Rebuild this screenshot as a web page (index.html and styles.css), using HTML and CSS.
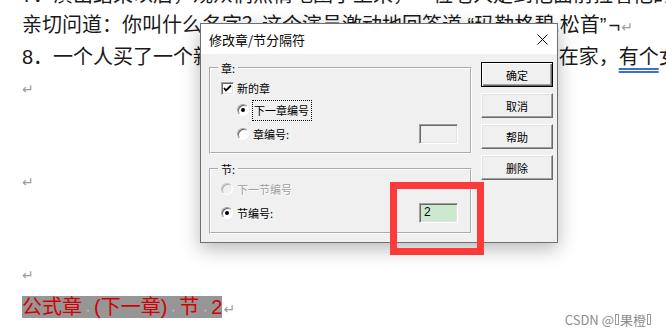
FILE: index.html
```html
<!DOCTYPE html>
<html lang="zh-CN">
<head>
    <meta charset="UTF-8">
    <title>修改章/节分隔符</title>
    <link rel="stylesheet" href="styles.css">
</head>
<body>
    <div class="doc">
        <p class="line first">7．演出结束以后，观众们热情地围了上来，一位老人走到他面前拉着他的手</p>
        <p class="line">亲切问道：你叫什么名字？这个演员激动地回答道 “玛勒格碧.松首”<span class="hook">¬</span><span class="pm">↵</span></p>
        <p class="line">8．一个人买了一个新奇的玩具，回到家里， 正好他的妻子不在家，<span class="uline">有个</span>女人</p>
        <p class="line empty"><span class="pm">↵</span></p>
        <p class="line empty gap"><span class="pm">↵</span></p>
        <p class="line empty gap"><span class="pm">↵</span></p>
        <p class="line"><span class="field">公式章<span class="sp">·</span>(下一章)<span class="sp">·</span>节<span class="sp">·</span>2</span><span class="pm">↵</span></p>
    </div>

    <div class="dialog">
        <div class="titlebar">
            <span class="title">修改章/节分隔符</span>
            <svg class="close" width="11" height="11" viewBox="0 0 11 11">
                <path d="M0.5 0.5 L10.5 10.5 M10.5 0.5 L0.5 10.5" stroke="#000" stroke-width="1" fill="none"/>
            </svg>
        </div>
        <div class="dialog-body">
            <div class="groups">
                <fieldset class="group chapter">
                    <legend>章:</legend>
                    <div class="opt first-opt">
                        <span class="check">
                            <svg width="11" height="11" viewBox="0 0 11 11">
                                <polyline points="2,5 4,7.5 9,2.5" stroke="#000" stroke-width="1.8" fill="none"/>
                            </svg>
                        </span>
                        <span>新的章</span>
                    </div>
                    <div class="opt indent">
                        <span class="radio on"></span>
                        <span class="focus">下一章编号</span>
                    </div>
                    <div class="opt indent third-opt">
                        <span class="radio"></span>
                        <span>章编号:</span>
                        <span class="num"></span>
                    </div>
                </fieldset>
                <fieldset class="group section">
                    <legend>节:</legend>
                    <div class="opt first-opt disabled">
                        <span class="radio"></span>
                        <span>下一节编号</span>
                    </div>
                    <div class="opt second-opt">
                        <span class="radio on"></span>
                        <span>节编号:</span>
                        <span class="num filled">2</span>
                    </div>
                </fieldset>
            </div>
            <div class="buttons">
                <button class="btn default">确定</button>
                <button class="btn">取消</button>
                <button class="btn">帮助</button>
                <button class="btn">删除</button>
            </div>
        </div>
    </div>

    <div class="callout"></div>

    <div class="watermark">CSDN @<span class="tofu"></span>果橙<span class="tofu"></span></div>
</body>
</html>
```

FILE: styles.css
```css
* {
    box-sizing: border-box;
}

body {
    margin: 0;
    width: 666px;
    height: 336px;
    overflow: hidden;
    background: #fff;
    font-family: "Liberation Sans", "Noto Sans CJK SC", sans-serif;
    color: #1a1a1a;
}

/* document text behind the dialog */
.doc {
    margin-top: -19px;
    padding-left: 22px;
}

.line {
    margin: 0;
    height: 32px;
    line-height: 32px;
    font-size: 20px;
    white-space: nowrap;
}

.line.first {
    height: 28px;
    line-height: 28px;
}

.line.gap {
    margin-top: 61px;
}

.hook {
    margin-left: 2px;
}

.pm {
    font-family: "DejaVu Sans", sans-serif;
    font-size: 14px;
    color: #9c9c9c;
    margin-left: 1px;
}

.empty .pm {
    margin-left: 0;
    vertical-align: 6px;
}

.uline {
    text-decoration: underline double #3b6fd4;
    text-underline-offset: 4px;
}

.field {
    background: #969696;
    color: #d40000;
}

.sp {
    display: inline-block;
    width: 12px;
    text-align: center;
    color: #d8d8d8;
    font-size: 12px;
}

/* dialog */
.dialog {
    position: absolute;
    left: 200px;
    top: 23px;
    width: 358px;
    height: 220px;
    border: 1px solid #6f6f6f;
    background: #f0f0f0;
    box-shadow: 0 6px 18px rgba(0, 0, 0, 0.28);
    font-family: "Noto Sans CJK SC", sans-serif;
    font-size: 11px;
    color: #000;
}

.titlebar {
    height: 30px;
    background: #fff;
    display: flex;
    align-items: center;
    justify-content: space-between;
    padding: 0 9px 0 8px;
}

.title {
    font-size: 13px;
}

.dialog-body {
    display: flex;
    gap: 9px;
    padding: 7px 4px 0 8px;
}

.groups {
    width: 263px;
    display: flex;
    flex-direction: column;
    gap: 8px;
}

.group {
    margin: 0;
    padding: 0 12px 0 10px;
    border: 2px groove #fff;
    min-width: 0;
}

.group legend {
    padding: 0 3px;
    margin-left: -3px;
    line-height: 14px;
    height: 14px;
}

.chapter {
    padding-bottom: 7px;
}

.section {
    padding-bottom: 8px;
}

.opt {
    display: flex;
    align-items: center;
    height: 22px;
    gap: 4px;
}

.first-opt {
    margin-top: 2px;
}

.second-opt,
.third-opt {
    margin-top: 2px;
}

.indent {
    margin-left: 16px;
}

.check {
    width: 13px;
    height: 13px;
    margin-right: -1px;
    background: #fff;
    border: 1px solid;
    border-color: #a0a0a0 #fff #fff #a0a0a0;
    box-shadow: inset 1px 1px 0 #696969, inset -1px -1px 0 #e3e3e3;
    display: flex;
    align-items: center;
    justify-content: center;
}

.radio {
    width: 12px;
    height: 12px;
    border-radius: 50%;
    background: #fff;
    border: 1px solid;
    border-color: #a0a0a0 #fff #fff #a0a0a0;
    box-shadow: inset 1px 1px 0 #696969;
    position: relative;
}

.radio.on::after {
    content: "";
    position: absolute;
    left: 3px;
    top: 3px;
    width: 4px;
    height: 4px;
    border-radius: 50%;
    background: #000;
}

.disabled {
    color: #a0a0a0;
    text-shadow: 1px 1px 0 #fff;
}

.disabled .radio {
    background: #f0f0f0;
    border-color: #c8c8c8 #fff #fff #c8c8c8;
    box-shadow: inset 1px 1px 0 #b0b0b0;
}

.focus {
    border: 1px dotted #000;
    padding: 1px 2px 2px 1px;
    margin-left: -1px;
}

.num {
    margin-left: auto;
    width: 39px;
    height: 20px;
    border: 1px solid;
    border-color: #a0a0a0 #fff #fff #a0a0a0;
    box-shadow: inset 1px 1px 0 #696969, inset -1px -1px 0 #e3e3e3;
    background: #f0f0f0;
    padding-left: 4px;
    line-height: 17px;
    font-family: "Liberation Sans", sans-serif;
    font-size: 12px;
}

.num.filled {
    background: #cce8cf;
}

.buttons {
    margin-top: 1px;
    display: flex;
    flex-direction: column;
    gap: 6px;
}

.btn {
    width: 72px;
    height: 25px;
    padding: 0;
    font-family: "Noto Sans CJK SC", sans-serif;
    font-size: 11px;
    color: #000;
    background: #f0f0f0;
    border: 1px solid;
    border-color: #fff #696969 #696969 #fff;
    box-shadow: inset -1px -1px 0 #a0a0a0, inset 1px 1px 0 #e3e3e3;
}

.btn.default {
    border: 1px solid #000;
    box-shadow: inset 1px 1px 0 #fff, inset -1px -1px 0 #696969, inset -2px -2px 0 #a0a0a0;
}

/* red highlight box drawn over the screenshot */
.callout {
    position: absolute;
    left: 390px;
    top: 182px;
    width: 94px;
    height: 73px;
    border: 7px solid #fd3a3a;
}

.watermark {
    position: absolute;
    right: 14px;
    bottom: 7px;
    font-family: "Noto Sans CJK SC", sans-serif;
    font-size: 13px;
    color: #8c8c8c;
    display: flex;
    align-items: center;
}

.tofu {
    display: inline-block;
    width: 4px;
    height: 11px;
    border: 1px solid #9a9a9a;
    margin: 0 1px;
}
```
